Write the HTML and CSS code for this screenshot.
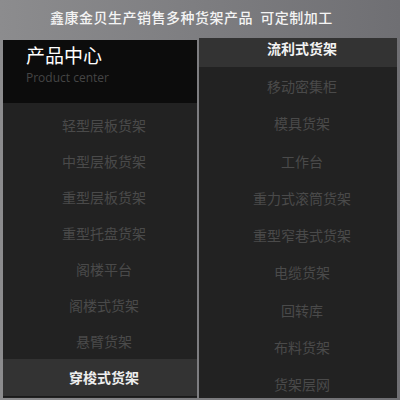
FILE: index.html
```html
<!DOCTYPE html>
<html lang="zh-CN">
<head>
  <meta charset="UTF-8" />
  <title>产品中心</title>
  <link rel="stylesheet" href="styles.css">
</head>
<body>
  <div class="top-title">鑫康金贝生产销售多种货架产品&nbsp;&nbsp;可定制加工</div>

  <div class="columns">
    <!-- 左侧分类 -->
    <div class="panel left">
      <div class="panel-head">
        <div class="head-cn">产品中心</div>
        <div class="head-en">Product center</div>
      </div>
      <ul class="menu">
        <li>轻型层板货架</li>
        <li>中型层板货架</li>
        <li>重型层板货架</li>
        <li>重型托盘货架</li>
        <li>阁楼平台</li>
        <li>阁楼式货架</li>
        <li>悬臂货架</li>
      </ul>
      <div class="active-bar">穿梭式货架</div>
    </div>

    <!-- 右侧分类 -->
    <div class="panel right">
      <div class="active-top">流利式货架</div>
      <ul class="menu menu-right">
        <li>移动密集柜</li>
        <li>模具货架</li>
        <li>工作台</li>
        <li>重力式滚筒货架</li>
        <li>重型窄巷式货架</li>
        <li>电缆货架</li>
        <li>回转库</li>
        <li>布料货架</li>
        <li>货架层网</li>
      </ul>
    </div>
  </div>
</body>
</html>
```

FILE: styles.css
```css
html, body {
  margin: 0;
  padding: 0;
}

body {
  width: 400px;
  height: 400px;
  overflow: hidden;
  background: linear-gradient(to right, #8c8c8e, #6f6f73);
  font-family: "Microsoft YaHei", "Noto Sans CJK SC", sans-serif;
}

.top-title {
  height: 36px;
  line-height: 34px;
  padding-left: 50px;
  color: #f4f4f4;
  font-size: 14px;
  font-weight: 500;
  letter-spacing: 0.5px;
  white-space: nowrap;
}

.columns {
  display: flex;
  align-items: flex-start;
  gap: 2px;
  padding-left: 3px;
  margin-top: 2px;
}

.panel {
  background: #222;
  height: 360px;
}

.left {
  width: 194px;
  margin-top: 2px;
  height: 358px;
}

.right {
  width: 198px;
}

.panel-head {
  background: #0c0c0c;
  height: 63px;
  padding-left: 23px;
  box-sizing: border-box;
  padding-top: 2px;
}

.head-cn {
  color: #fff;
  font-size: 19px;
  line-height: 26px;
}

.head-en {
  color: #454545;
  font-size: 12px;
  line-height: 16px;
  font-family: "Open Sans", "Liberation Sans", sans-serif;
  margin-top: 2px;
}

.menu {
  list-style: none;
  margin: 0;
  padding: 4px 0 0 8px;
}

.menu li {
  height: 36px;
  line-height: 36px;
  text-align: center;
  color: #4a4a4a;
  font-size: 14px;
}

.menu-right {
  padding-top: 1px;
}

.menu-right li {
  height: 37.3px;
  line-height: 37px;
}

.active-bar {
  background: #333;
  height: 37px;
  line-height: 37px;
  text-align: center;
  padding-left: 8px;
  color: #eee;
  font-size: 14px;
  font-weight: bold;
  border-bottom: 1px solid #1a1a1a;
}

.active-top {
  background: #333;
  height: 29px;
  line-height: 21px;
  text-align: center;
  padding-left: 8px;
  color: #f2f2f2;
  font-size: 14px;
  font-weight: bold;
}
```
